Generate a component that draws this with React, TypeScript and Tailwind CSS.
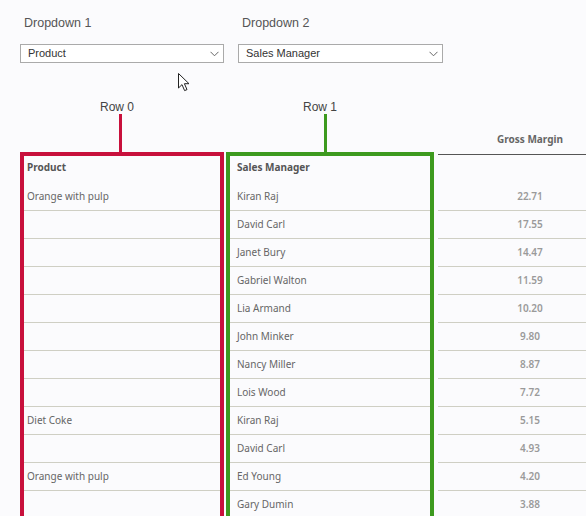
import React from 'react';

const products = ['Orange with pulp', '', '', '', '', '', '', '', 'Diet Coke', '', 'Orange with pulp', '', ''];
const managers = [
  'Kiran Raj', 'David Carl', 'Janet Bury', 'Gabriel Walton', 'Lia Armand', 'John Minker',
  'Nancy Miller', 'Lois Wood', 'Kiran Raj', 'David Carl', 'Ed Young', 'Gary Dumin', '',
];
const margins = ['22.71', '17.55', '14.47', '11.59', '10.20', '9.80', '8.87', '7.72', '5.15', '4.93', '4.20', '3.88', ''];

const Chevron = () => (
  <svg width="9" height="6" viewBox="0 0 9 6" className="shrink-0">
    <polyline points="0.5,0.8 4.5,4.8 8.5,0.8" fill="none" stroke="#666" strokeWidth="1" />
  </svg>
);

const Dropdown = ({ label, value, width }: { label: string; value: string; width: string }) => (
  <div className={`flex flex-col ${width}`}>
    <div className="pl-[4px] h-[16px] leading-[16px] text-[12.5px] text-[#555]">{label}</div>
    <div className="mt-[13px] h-[19px] border border-[#aaa] bg-white flex items-center justify-between pl-[7px] pr-[4px]">
      <span className="text-[11px] text-[#333] leading-none">{value}</span>
      <Chevron />
    </div>
  </div>
);

const Cursor = () => (
  <svg width="13" height="19" viewBox="0 0 13 19" className="absolute left-[178px] top-[73px]">
    <path d="M0.5 0.5 L0.5 15 L4 11.6 L6.6 17.6 L9 16.6 L6.4 10.7 L11 10.7 Z" fill="#fff" stroke="#222" strokeWidth="1" strokeLinejoin="round" />
  </svg>
);

export default function App() {
  return (
    <div
      className="relative w-[586px] h-[516px] overflow-hidden bg-[#fbfbfd]"
      style={{ fontFamily: '"Liberation Sans", Arial, sans-serif' }}
    >
      {/* Dropdowns */}
      <div className="flex pl-[20px] pt-[15px] gap-[14px]">
        <Dropdown label="Dropdown 1" value="Product" width="w-[204px]" />
        <Dropdown label="Dropdown 2" value="Sales Manager" width="w-[205px]" />
      </div>

      {/* Table area */}
      <div className="flex mt-[37px] pl-[20px]">
        {/* Row 0 / red box */}
        <div className="flex flex-col w-[204px] shrink-0">
          <div className="pl-[80px] h-[14px] leading-[14px] text-[12px] text-[#444]">Row 0</div>
          <div className="ml-[99px] w-[3px] h-[38px] bg-[#c8103c]" />
          <div className="border-4 border-[#c8103c]" style={{ fontFamily: '"Noto Sans", "Open Sans", sans-serif' }}>
            <div className="h-[27px] pt-[4px] pl-[3px] text-[10px] leading-[14px] font-bold text-[#555]">Product</div>
            {products.map((p, i) => (
              <div key={i} className="h-[28px] border-b border-[#cfcfc4] flex items-center pl-[3px] text-[10px] text-[#666]">
                {p}
              </div>
            ))}
          </div>
        </div>

        {/* Row 1 / green box */}
        <div className="flex flex-col w-[208px] ml-[2px] shrink-0">
          <div className="pl-[77px] h-[14px] leading-[14px] text-[12px] text-[#444]">Row 1</div>
          <div className="ml-[98px] w-[3px] h-[38px] bg-[#3d9a1f]" />
          <div className="border-4 border-[#3d9a1f]" style={{ fontFamily: '"Noto Sans", "Open Sans", sans-serif' }}>
            <div className="h-[27px] pt-[4px] pl-[7px] text-[10px] leading-[14px] font-bold text-[#555]">Sales Manager</div>
            {managers.map((m, i) => (
              <div key={i} className="h-[28px] border-b border-[#cfcfc4] flex items-center pl-[7px] text-[10px] text-[#666]">
                {m}
              </div>
            ))}
          </div>
        </div>

        {/* Gross Margin */}
        <div className="flex flex-col w-[184px] ml-[4px] shrink-0" style={{ fontFamily: '"Noto Sans", "Open Sans", sans-serif' }}>
          <div className="h-[54px] flex items-end justify-center pb-[8px] text-[10px] leading-[14px] font-bold text-[#666]">
            Gross Margin
          </div>
          <div className="h-px bg-[#555]" />
          <div className="h-[28px]" />
          {margins.map((v, i) => (
            <div key={i} className="h-[28px] border-b border-[#cfcfc4] flex items-center justify-center text-[10px] font-semibold text-[#9a9a9a]">
              {v}
            </div>
          ))}
        </div>
      </div>

      <Cursor />
    </div>
  );
}
